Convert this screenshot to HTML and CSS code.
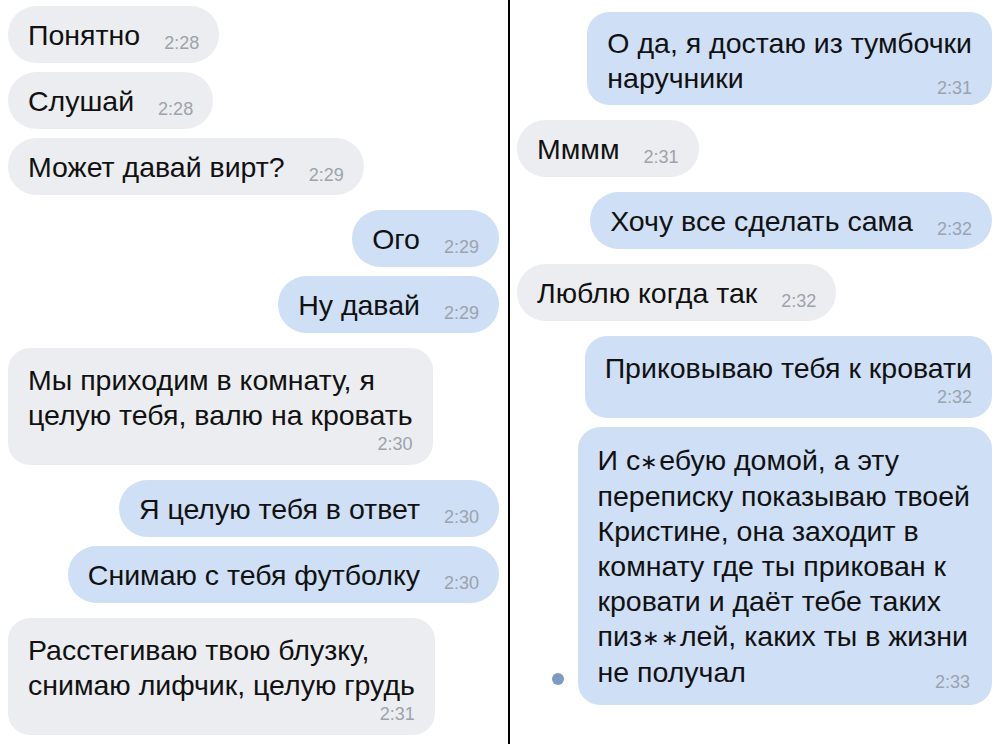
FILE: index.html
```html
<!DOCTYPE html>
<html lang="ru">
<head>
<meta charset="utf-8">
<title>Переписка</title>
<link rel="stylesheet" href="styles.css">
</head>
<body>
<div class="sheet">
  <section class="panel panel-left">
    <div class="msg in"><div class="bubble"><span class="text">Понятно</span><span class="time">2:28</span></div></div>
    <div class="msg in"><div class="bubble"><span class="text">Слушай</span><span class="time">2:28</span></div></div>
    <div class="msg in"><div class="bubble"><span class="text">Может давай вирт?</span><span class="time">2:29</span></div></div>

    <div class="msg out group"><div class="bubble"><span class="text">Ого</span><span class="time">2:29</span></div></div>
    <div class="msg out"><div class="bubble"><span class="text">Ну давай</span><span class="time">2:29</span></div></div>

    <div class="msg in group"><div class="bubble multi"><p class="text">Мы приходим в комнату, я<br>целую тебя, валю на кровать</p><div class="stamp">2:30</div></div></div>

    <div class="msg out group"><div class="bubble"><span class="text">Я целую тебя в ответ</span><span class="time">2:30</span></div></div>
    <div class="msg out"><div class="bubble"><span class="text">Снимаю с тебя футболку</span><span class="time">2:30</span></div></div>

    <div class="msg in group"><div class="bubble multi"><p class="text">Расстегиваю твою блузку,<br>снимаю лифчик, целую грудь</p><div class="stamp">2:31</div></div></div>
  </section>

  <section class="panel panel-right">
    <div class="msg out"><div class="bubble multi tailed"><p class="text">О да, я достаю из тумбочки<br>наручники<span class="time tail">2:31</span></p></div></div>

    <div class="msg in group"><div class="bubble"><span class="text">Мммм</span><span class="time">2:31</span></div></div>

    <div class="msg out group"><div class="bubble"><span class="text">Хочу все сделать сама</span><span class="time">2:32</span></div></div>

    <div class="msg in group"><div class="bubble"><span class="text">Люблю когда так</span><span class="time">2:32</span></div></div>

    <div class="msg out group"><div class="bubble multi"><p class="text">Приковываю тебя к кровати</p><div class="stamp">2:32</div></div></div>
    <div class="msg out">
      <span class="unread"></span>
      <div class="bubble multi long"><p class="text">И с<span class="star">∗</span>ебую домой, а эту<br>переписку показываю твоей<br>Кристине, она заходит в<br>комнату где ты прикован к<br>кровати и даёт тебе таких<br>пиз<span class="star">∗∗</span>лей, каких ты в жизни<br>не получал<span class="time tail">2:33</span></p></div>
    </div>
  </section>
</div>
</body>
</html>
```

FILE: styles.css
```css
html, body {
  margin: 0;
  padding: 0;
  background: #ffffff;
}

body {
  font-family: "Liberation Sans", Arial, sans-serif;
  color: #111111;
}

.sheet {
  display: flex;
  width: 1000px;
  height: 744px;
  overflow: hidden;
}

.panel {
  display: flex;
  flex-direction: column;
}

.panel-left {
  width: 491px;
  padding: 6px 9px 0 8px;
  border-right: 2px solid #000000;
}

.panel-right {
  flex: 1;
  padding: 12px 8px 0 7px;
}

/* one message row */
.msg {
  display: flex;
  align-items: flex-end;
  margin-top: 9px;
}

.msg:first-child {
  margin-top: 0;
}

.msg.group {
  margin-top: 15px;
}

.msg.out {
  justify-content: flex-end;
}

.bubble {
  padding: 12px 20px 10px;
  border-radius: 29px;
  font-size: 28.5px;
  line-height: 35px;
  white-space: nowrap;
}

.msg.in .bubble {
  background: #ebedf0;
}

.msg.out .bubble {
  background: #cedff6;
}

.bubble.multi {
  border-radius: 22px;
  padding: 15px 20px 10px;
}

.bubble.multi.tailed {
  padding: 14px 20px 8px;
}

.bubble.multi.long {
  padding: 16px 22px 14px 20px;
}

.text {
  margin: 0;
}

/* censoring asterisks sit small and centred on the x-height */
.star {
  font-size: 0.72em;
  letter-spacing: 1px;
  vertical-align: 1px;
}

.time {
  display: inline-block;
  margin-left: 24px;
  font-size: 18px;
  line-height: 18px;
  vertical-align: -4px;
  color: #9ca3ad;
}

/* timestamp sitting at the end of the last line */
.time.tail {
  float: right;
  line-height: 18px;
  margin-top: 18px;
  vertical-align: baseline;
}

/* timestamp on its own line under the text */
.stamp {
  text-align: right;
  font-size: 18px;
  line-height: 22px;
  color: #9ca3ad;
}

.unread {
  width: 12px;
  height: 12px;
  border-radius: 50%;
  background: #7f9ac2;
  margin: 0 14px 20px 0;
}
```
